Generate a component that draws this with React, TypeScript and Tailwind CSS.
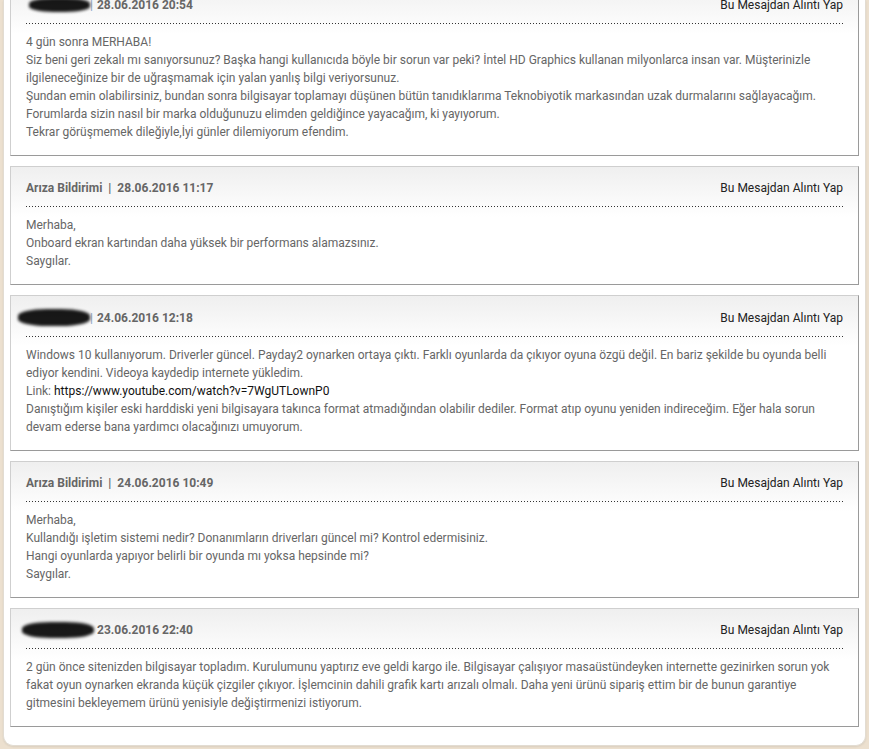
import React from "react";

type Post = {
  author: "staff" | "blob";
  blob?: { w: number; h: number; ml: number; sep: boolean };
  date: string;
  lines: React.ReactNode[];
};

const posts: Post[] = [
  {
    author: "blob",
    blob: { w: 61, h: 14, ml: 3, sep: true },
    date: "28.06.2016 20:54",
    lines: [
      "4 gün sonra MERHABA!",
      "Siz beni geri zekalı mı sanıyorsunuz? Başka hangi kullanıcıda böyle bir sorun var peki? İntel HD Graphics kullanan milyonlarca insan var. Müşterinizle",
      "ilgileneceğinize bir de uğraşmamak için yalan yanlış bilgi veriyorsunuz.",
      "Şundan emin olabilirsiniz, bundan sonra bilgisayar toplamayı düşünen bütün tanıdıklarıma Teknobiyotik markasından uzak durmalarını sağlayacağım.",
      "Forumlarda sizin nasıl bir marka olduğunuzu elimden geldiğince yayacağım, ki yayıyorum.",
      "Tekrar görüşmemek dileğiyle,İyi günler dilemiyorum efendim.",
    ],
  },
  {
    author: "staff",
    date: "28.06.2016 11:17",
    lines: [
      "Merhaba,",
      "Onboard ekran kartından daha yüksek bir performans alamazsınız.",
      "Saygılar.",
    ],
  },
  {
    author: "blob",
    blob: { w: 72, h: 17, ml: -8, sep: true },
    date: "24.06.2016 12:18",
    lines: [
      "Windows 10 kullanıyorum. Driverler güncel. Payday2 oynarken ortaya çıktı. Farklı oyunlarda da çıkıyor oyuna özgü değil. En bariz şekilde bu oyunda belli",
      "ediyor kendini. Videoya kaydedip internete yükledim.",
      <>
        Link: <span className="text-[#111]">https://www.youtube.com/watch?v=7WgUTLownP0</span>
      </>,
      "Danıştığım kişiler eski harddiski yeni bilgisayara takınca format atmadığından olabilir dediler. Format atıp oyunu yeniden indireceğim. Eğer hala sorun",
      "devam ederse bana yardımcı olacağınızı umuyorum.",
    ],
  },
  {
    author: "staff",
    date: "24.06.2016 10:49",
    lines: [
      "Merhaba,",
      "Kullandığı işletim sistemi nedir? Donanımların driverları güncel mi? Kontrol edermisiniz.",
      "Hangi oyunlarda yapıyor belirli bir oyunda mı yoksa hepsinde mi?",
      "Saygılar.",
    ],
  },
  {
    author: "blob",
    blob: { w: 72, h: 16, ml: -4, sep: false },
    date: "23.06.2016 22:40",
    lines: [
      "2 gün önce sitenizden bilgisayar topladım. Kurulumunu yaptırız eve geldi kargo ile. Bilgisayar çalışıyor masaüstündeyken internette gezinirken sorun yok",
      "fakat oyun oynarken ekranda küçük çizgiler çıkıyor. İşlemcinin dahili grafik kartı arızalı olmalı. Daha yeni ürünü sipariş ettim bir de bunun garantiye",
      "gitmesini bekleyemem ürünü yenisiyle değiştirmenizi istiyorum.",
    ],
  },
];

function PostCard({ post, first }: { post: Post; first?: boolean }) {
  return (
    <div
      className={`border border-[#cfcfcf] border-r-[#9a9a9a] border-b-[#9a9a9a] bg-[linear-gradient(to_bottom,#efefef,#ffffff_50px)] px-[15px] pt-[13px] pb-[14px] ${
        first ? "-mt-[17px]" : ""
      }`}
    >
      <div className="flex items-center justify-between min-h-[16px] mb-[10px]">
        <div className="flex items-center text-[12px] font-bold text-[#666] leading-[16px]">
          {post.author === "staff" ? (
            <>
              <span>Arıza Bildirimi</span>
              <span className="mx-[6px]">|</span>
            </>
          ) : (
            <>
              <span
                className="inline-block bg-black rounded-[40%] blur-[1.5px] opacity-90"
                style={{ width: post.blob!.w, height: post.blob!.h, marginLeft: post.blob!.ml }}
              />
              {post.blob!.sep ? (
                <span className="text-[#8aa6c8] font-normal mr-[4px]">|</span>
              ) : (
                <span className="w-[3px]" />
              )}
            </>
          )}
          <span>{post.date}</span>
        </div>
        <span className="text-[12px] text-[#222] leading-[16px]">Bu Mesajdan Alıntı Yap</span>
      </div>
      <div className="h-px bg-[linear-gradient(to_right,#333_1px,transparent_1px)] bg-[length:3px_1px]" />
      <div className="pt-[9px] text-[12px] leading-[18px] text-[#666]">
        {post.lines.map((l, i) => (
          <div key={i} className="whitespace-nowrap">
            {l}
          </div>
        ))}
      </div>
    </div>
  );
}

export default function App() {
  return (
    <div
      className="h-[749px] overflow-hidden bg-[#ece0cf] px-[3px]"
      style={{ fontFamily: "Roboto, 'Liberation Sans', sans-serif" }}
    >
      <div className="bg-white border-l border-r border-b border-[#e2dcd2] rounded-b-[10px] px-[6px] pb-[18px] shadow-[0_1px_2px_rgba(0,0,0,0.08)]">
        <div className="flex flex-col gap-[10px]">
          {posts.map((p, i) => (
            <PostCard key={i} post={p} first={i === 0} />
          ))}
        </div>
      </div>
    </div>
  );
}
